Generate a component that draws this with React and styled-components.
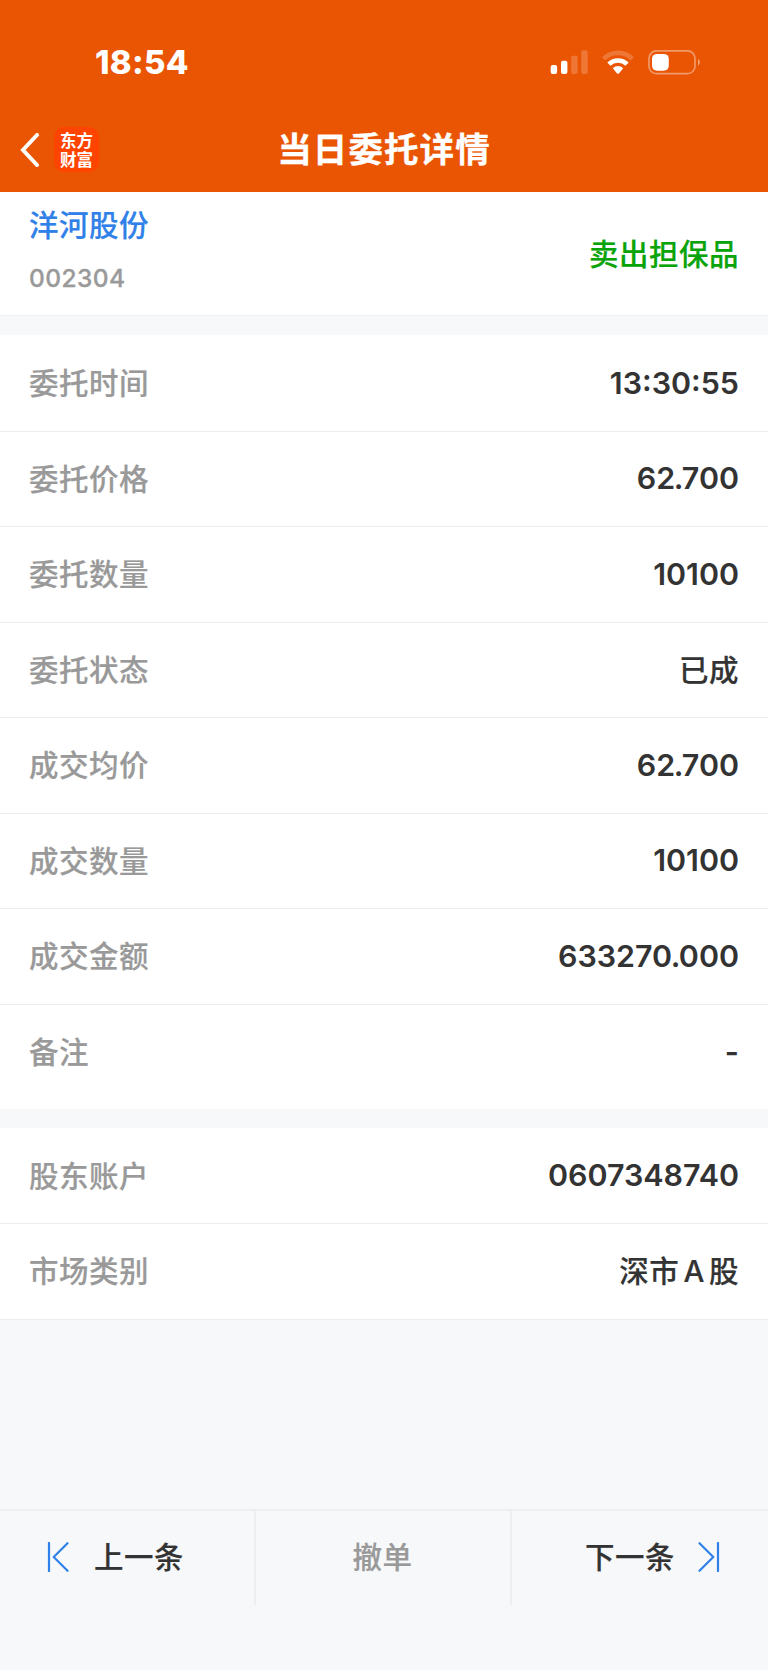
import React from 'react'
import styled, {createGlobalStyle} from 'styled-components'

const orderItems = [
    {label:'委托时间', value:'13:30:55'},
    {label:'委托价格', value:'62.700'},
    {label:'委托数量', value:'10100'},
    {label:'委托状态', value:'已成', cjk:true},
    {label:'成交均价', value:'62.700'},
    {label:'成交数量', value:'10100'},
    {label:'成交金额', value:'633270.000'},
    {label:'备注', value:'-'},
]
const accountItems = [
    {label:'股东账户', value:'0607348740'},
    {label:'市场类别', value:'深市 A 股', cjk:true},
]

function StatusIcons() {
    return (
        <svg width="152" height="28" viewBox="0 0 152 28">
            <g fill="#fff">
                <rect x="2.7" y="17" width="6.4" height="9" rx="2" />
                <rect x="13" y="12.7" width="6.4" height="13.3" rx="2" />
                <rect x="23.2" y="7.7" width="6.4" height="18.3" rx="2" opacity=".2" />
                <rect x="33.3" y="2.3" width="6.4" height="23.7" rx="2" opacity=".2" />
            </g>
            <g fill="none" stroke="#fff" strokeWidth="4.6">
                <path d="M55.6 10.8 A20.5 20.5 0 0 1 84.4 10.8" opacity=".2" />
                <path d="M60.9 16.2 A13 13 0 0 1 79.1 16.2" />
            </g>
            <path d="M64.8 20.3 A7.3 7.3 0 0 1 75.2 20.3 L70.9 25.4 Q70 26.3 69.1 25.4 Z" fill="#fff" />
            <rect x="101" y="2.9" width="46" height="22.8" rx="7.5" fill="none" stroke="#fff" strokeOpacity=".4" strokeWidth="1.7" />
            <rect x="104" y="5.9" width="16.8" height="16.8" rx="5" fill="#fff" />
            <path d="M150 10.7 A4.4 4.4 0 0 1 150 17.9 Z" fill="#fff" opacity=".45" />
        </svg>
    )
}

function StepIcon({flip}) {
    return (
        <svg width="22" height="30" viewBox="0 0 22 30">
            <path
                d={flip ? 'M20 1V29M1.5 1.2L15.3 15L1.5 28.8' : 'M2 1V29M20.5 1.2L6.7 15L20.5 28.8'}
                fill="none" stroke="#2f80e8" strokeWidth="2.2" strokeLinecap="round" strokeLinejoin="round"
            />
        </svg>
    )
}

function Amount({value}) {
    const [whole, decimals]=value.split('.');
    if(!decimals)
    {
        return value
    }
    return <>{whole}<Dot>.</Dot>{decimals}</>
}

function Rows({items}) {
    return items.map(item=>(
        <Row key={item.label}>
            <Label>{item.label}</Label>
            <Value $cjk={item.cjk}><Amount value={item.value} /></Value>
        </Row>
    ))
}

function App() {
    return (
        <Container>
            <GlobalStyle />
            <Header>
                <StatusBar>
                    <Time>18:54</Time>
                    <StatusIcons />
                </StatusBar>
                <NavBar>
                    <NavLeft>
                        <svg width="20" height="34" viewBox="0 0 20 34">
                            <path d="M17 2L3 17L17 32" fill="none" stroke="#fff" strokeWidth="4" strokeLinecap="round" />
                        </svg>
                        <Logo>
                            <LogoLine>东方</LogoLine>
                            <LogoLine>财富</LogoLine>
                        </Logo>
                    </NavLeft>
                    <Title>当日委托详情</Title>
                </NavBar>
            </Header>
            <Summary>
                <div>
                    <StockName>洋河股份</StockName>
                    <StockCode>002304</StockCode>
                </div>
                <Direction>卖出担保品</Direction>
            </Summary>
            <OrderSection>
                <Rows items={orderItems} />
            </OrderSection>
            <AccountSection>
                <Rows items={accountItems} />
            </AccountSection>
            <Footer>
                <FooterButton $align="flex-start">
                    <StepIcon />
                    <FooterText>上一条</FooterText>
                </FooterButton>
                <FooterButton>
                    <FooterText $disabled>撤单</FooterText>
                </FooterButton>
                <FooterButton $align="flex-end">
                    <FooterText>下一条</FooterText>
                    <StepIcon flip />
                </FooterButton>
            </Footer>
        </Container>
    )
}

export default App

const GlobalStyle = createGlobalStyle`
*{
    box-sizing:border-box;
}
body{
    margin:0;
    background:#f7f8fa;
    font-family:Inter,"Noto Sans CJK SC",sans-serif;
}
`
const Container= styled.div`
width:768px;
height:1670px;
display:flex;
flex-direction:column;
background:#f7f8fa;
color:#333;
overflow:hidden;
`
const Header= styled.header`
height:192px;
flex:none;
background:#ea5504;
color:white;
`
const StatusBar= styled.div`
height:107px;
display:flex;
justify-content:space-between;
align-items:flex-start;
padding:48px 68px 0 95px;
`
const Time= styled.div`
font-size:33px;
font-weight:800;
letter-spacing:0.3px;
line-height:29px;
`
const NavBar= styled.div`
height:85px;
display:grid;
grid-template-columns:1fr auto 1fr;
align-items:center;
`
const NavLeft= styled.div`
display:flex;
align-items:center;
gap:14px;
padding-left:20px;
`
const Logo= styled.div`
width:45px;
height:45px;
padding-top:3.5px;
border-radius:10px;
background:#ff4400;
`
const LogoLine= styled.div`
font-family:"Noto Sans CJK SC",sans-serif;
font-size:16.5px;
font-weight:700;
line-height:19px;
text-align:center;
`
const Title= styled.h1`
margin:0;
padding-bottom:6px;
font-family:"Noto Sans CJK SC",sans-serif;
font-size:34.5px;
font-weight:700;
letter-spacing:1.1px;
line-height:40px;
-webkit-text-stroke:0.3px;
`
const CjkText= styled.div`
font-family:"Noto Sans CJK SC",sans-serif;
font-size:29.5px;
font-weight:500;
letter-spacing:0.5px;
line-height:40px;
-webkit-text-stroke:0.2px;
`
const Summary= styled.section`
height:123.5px;
flex:none;
display:flex;
justify-content:space-between;
padding:0 29px;
background:white;
border-bottom:1px solid #efefef;
`
const StockName= styled(CjkText)`
margin-top:11px;
color:#2f80e8;
`
const StockCode= styled.div`
margin-top:20px;
font-size:24.5px;
font-weight:500;
letter-spacing:0.4px;
line-height:30px;
color:#999;
-webkit-text-stroke:0.3px;
`
const Direction= styled(CjkText)`
margin-top:40px;
color:#0aa30a;
`
const OrderSection= styled.section`
flex:none;
margin-top:19.5px;
padding:1.4px 0 8.6px;
background:white;
`
const AccountSection= styled.section`
flex:none;
margin-top:19px;
padding-top:0.8px;
background:white;
`
const Row= styled.div`
height:95.5px;
display:flex;
justify-content:space-between;
align-items:center;
padding:0 29px;
border-bottom:1px solid #ececec;

${OrderSection} &:last-child{
    border-bottom:none;
}
`
const Label= styled(CjkText)`
padding-bottom:5px;
color:#999;
`
const Value= styled.div`
padding-bottom:${props=>props.$cjk ? '1px' : '2px'};
font-family:Inter,"Noto Sans CJK SC",sans-serif;
font-size:${props=>props.$cjk ? '29.5px' : '30.4px'};
font-weight:${props=>props.$cjk ? 500 : 600};
letter-spacing:${props=>props.$cjk ? '0.5px' : '0'};
word-spacing:${props=>props.$cjk ? '-4.2px' : '0'};
line-height:40px;
-webkit-text-stroke:${props=>props.$cjk ? '0.2px' : '0'};
`
const Dot= styled.span`
margin:0 -1.5px;
`
const Footer= styled.footer`
display:grid;
grid-template-columns:repeat(3,1fr);
height:96px;
flex:none;
margin-top:auto;
margin-bottom:65px;
border-top:2px solid #eeeeee;
`
const FooterButton= styled.div`
display:flex;
justify-content:${props=>props.$align || 'center'};
align-items:center;
gap:${props=>props.$align==='flex-start' ? '25px' : '23px'};
padding:0 48px 3px 47px;

&:not(:last-child){
    border-right:2px solid #eeeeee;
}
`
const FooterText= styled(CjkText)`
padding-bottom:4px;
color:${props=>props.$disabled ? '#999' : '#333'};
`
